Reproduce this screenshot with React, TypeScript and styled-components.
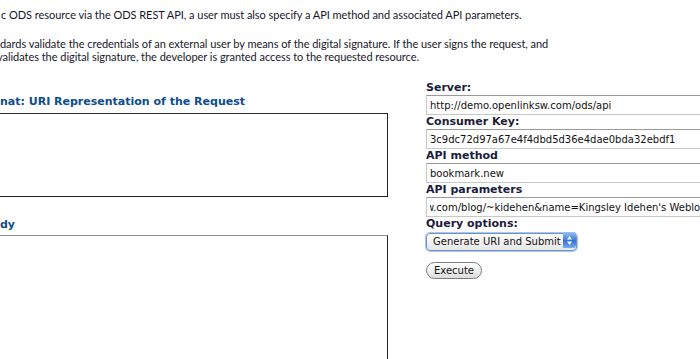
import React, { useLayoutEffect, useRef } from "react";
import styled, { createGlobalStyle } from "styled-components";

const Global = createGlobalStyle`
  html, body { margin: 0; padding: 0; background: #fff; }
  body { overflow: hidden; width: 700px; height: 359px; }
`;

const Page = styled.div`
  width: 700px;
  height: 359px;
  overflow: hidden;
  display: flex;
  flex-direction: column;
  padding-top: 8px;
  box-sizing: border-box;
`;

const Intro = styled.div`
  font-family: "Lato", "Liberation Sans", sans-serif;
  font-size: 11px;
  line-height: 13px;
  letter-spacing: -0.04px;
  color: #17172b;
  display: flex;
  flex-direction: column;
  gap: 16px;
`;

const Para = styled.div``;

const Line = styled.div<{ $shift?: number }>`
  white-space: nowrap;
  text-indent: ${(p) => p.$shift ?? 0}px;
`;

const Columns = styled.div`
  display: grid;
  grid-template-columns: 388px 1fr;
  column-gap: 38px;
  margin-top: 18px;
`;

const LeftCol = styled.div`
  display: flex;
  flex-direction: column;
  padding-top: 14px;
`;

const Heading = styled.div<{ $gap?: number }>`
  font-family: "DejaVu Sans", Verdana, sans-serif;
  font-weight: bold;
  font-size: 11px;
  line-height: 14px;
  color: #0e4c8c;
  white-space: nowrap;
  margin-top: ${(p) => p.$gap ?? 0}px;
`;

const Area = styled.textarea<{ $h: number; $top: string; $gap: number }>`
  display: block;
  box-sizing: border-box;
  margin: ${(p) => p.$gap}px 0 0 -6px;
  width: calc(100% + 6px);
  height: ${(p) => p.$h}px;
  border: 1px solid #222;
  border-top-color: ${(p) => p.$top};
  background: #fff;
  resize: none;
  outline: none;
  padding: 2px;
`;

const RightCol = styled.div`
  display: flex;
  flex-direction: column;
  min-width: 0;
`;

const Label = styled.div`
  font-family: "DejaVu Sans", Verdana, sans-serif;
  font-weight: bold;
  font-size: 11px;
  line-height: 14px;
  color: #1c1c3a;
  white-space: nowrap;
`;

const Field = styled.input`
  display: block;
  box-sizing: border-box;
  width: 282px;
  height: 20px;
  margin: 0;
  padding: 0 3px;
  border: 1px solid #c8c8c8;
  border-top-color: #9a9a9a;
  background: #fff;
  font-family: "DejaVu Sans", Verdana, sans-serif;
  font-size: 10px;
  color: #111;
  outline: none;
`;

const SelectWrap = styled.div`
  position: relative;
  width: 151px;
  height: 18px;
`;

const Select = styled.select`
  appearance: none;
  -webkit-appearance: none;
  box-sizing: border-box;
  width: 151px;
  height: 18px;
  margin: 0;
  padding: 0 0 0 6px;
  border: 1px solid #6f93c6;
  border-radius: 4px;
  box-shadow: 0 0 0 1px #aac6ec;
  background: linear-gradient(#ffffff, #f2f2f2 50%, #e6e6e6);
  font-family: "DejaVu Sans", Verdana, sans-serif;
  font-size: 10px;
  color: #111;
  outline: none;
`;

const Arrows = styled.span`
  position: absolute;
  right: 1px;
  top: 1px;
  width: 13px;
  height: 16px;
  border-radius: 0 3px 3px 0;
  background: linear-gradient(#9cc3f2, #3d7fdb 50%, #2f72d6 55%, #76aef0);
  display: flex;
  align-items: center;
  justify-content: center;
  pointer-events: none;
`;

const Button = styled.button`
  align-self: flex-start;
  margin-top: 13px;
  height: 17px;
  padding: 0 7px;
  border: 1px solid #7d7d7d;
  border-radius: 9px;
  background: linear-gradient(#ffffff, #f0f0f0 50%, #dcdcdc);
  font-family: "DejaVu Sans", Verdana, sans-serif;
  font-size: 10px;
  line-height: 15px;
  color: #111;
`;

const PARAMS =
  "url=http://www.openlinksw.com/blog/~kidehen&name=Kingsley Idehen's Weblog";

function ParamsField() {
  const ref = useRef<HTMLInputElement>(null);
  useLayoutEffect(() => {
    const el = ref.current;
    if (!el) return;
    const c = document.createElement("canvas").getContext("2d");
    if (!c) return;
    const cs = getComputedStyle(el);
    c.font = `${cs.fontSize} ${cs.fontFamily}`;
    const before = c.measureText("url=http://www.openlinks").width;
    const w = c.measureText("w").width;
    el.scrollLeft = Math.round(before + w / 2);
  }, []);
  return <Field ref={ref} readOnly value={PARAMS} />;
}

export default function App() {
  return (
    <>
      <Global />
      <Page>
        <Intro>
          <Para>
            <Line $shift={1}>
              c ODS resource via the ODS REST API, a user must also specify a API method and associated API parameters.
            </Line>
          </Para>
          <Para>
            <Line>
              dards validate the credentials of an external user by means of the digital signature. If the user signs the request, and
            </Line>
            <Line $shift={-3}>
              validates the digital signature, the developer is granted access to the requested resource.
            </Line>
          </Para>
        </Intro>
        <Columns>
          <LeftCol>
            <Heading>nat: URI Representation of the Request</Heading>
            <Area $h={84} $top="#2a2a2a" $gap={4} readOnly />
            <Heading $gap={21}>dy</Heading>
            <Area $h={140} $top="#8a8a8a" $gap={3} readOnly />
          </LeftCol>
          <RightCol>
            <Label>Server:</Label>
            <Field readOnly value="http://demo.openlinksw.com/ods/api" />
            <Label>Consumer Key:</Label>
            <Field readOnly value="3c9dc72d97a67e4f4dbd5d36e4dae0bda32ebdf1" />
            <Label>API method</Label>
            <Field readOnly value="bookmark.new" />
            <Label>API parameters</Label>
            <ParamsField />
            <Label>Query options:</Label>
            <SelectWrap>
              <Select defaultValue="gen">
                <option value="gen">Generate URI and Submit</option>
                <option value="uri">Generate URI</option>
              </Select>
              <Arrows>
                <svg width="7" height="11" viewBox="0 0 7 11">
                  <path d="M3.5 1 L6 4.5 L1 4.5 Z" fill="#fff" />
                  <path d="M3.5 10 L6 6.5 L1 6.5 Z" fill="#fff" />
                </svg>
              </Arrows>
            </SelectWrap>
            <Button type="button">Execute</Button>
          </RightCol>
        </Columns>
      </Page>
    </>
  );
}
